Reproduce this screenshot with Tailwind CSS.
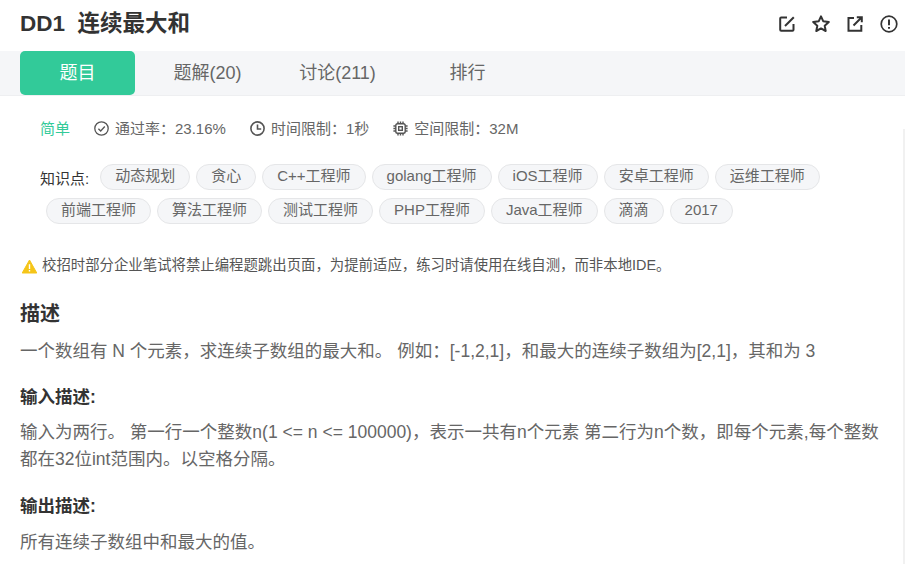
<!DOCTYPE html>
<html lang="zh-CN">
  <head>
    <meta charset="UTF-8" />
    <title>DD1 连续最大和</title>
    <script src="https://cdn.jsdelivr.net/npm/@tailwindcss/browser@4"></script>
  </head>
  <body class="h-[564px] w-[905px] overflow-hidden bg-white font-['Liberation_Sans','Noto_Sans_CJK_SC',sans-serif] text-[#666]">
    <!-- Title row -->
    <div class="flex h-[51px] items-center justify-between pr-[7px] pb-[4px] pl-5">
      <h1 class="text-[22.5px] font-bold whitespace-pre text-[#333]">DD1  连续最大和</h1>
      <div class="flex items-center gap-4 text-[#333]">
        <svg class="h-[18px] w-[18px]" viewBox="0 0 18 18" fill="none" stroke="currentColor" stroke-width="2"><path d="M9 2.5H3.2a1 1 0 0 0-1 1v11.3a1 1 0 0 0 1 1h11.3a1 1 0 0 0 1-1V9" /><path d="M7 11 15.8 2.2" /></svg>
        <svg class="h-[18px] w-[18px]" viewBox="0 0 18 18" fill="none" stroke="currentColor" stroke-width="2" stroke-linejoin="round"><path d="M9 1.4 11.2 6.2 16.8 7 12.7 10.7 13.7 16 9 13.4 4.3 16 5.3 10.7 1.2 7 6.8 6.2Z" /></svg>
        <svg class="h-[18px] w-[18px]" viewBox="0 0 18 18" fill="none" stroke="currentColor" stroke-width="2"><path d="M8 3H2.5v12.8h12.8V10" /><path d="M7.5 10.5 15.5 2.5M10.8 2.2h5v5" /></svg>
        <svg class="h-[18px] w-[18px]" viewBox="0 0 18 18" fill="none" stroke="currentColor" stroke-width="1.7"><circle cx="9" cy="9" r="7.8" /><path d="M9 4.6v5.6" stroke-width="2" /><path d="M9 12v1.8" stroke-width="2" /></svg>
      </div>
    </div>

    <!-- Tabs -->
    <div class="flex h-[45px] gap-[15px] border-b border-[#eeeff1] bg-[#f5f6f8] pl-5 text-lg">
      <a class="flex h-[44px] w-[115px] items-center justify-center rounded-[5px] bg-[#32ca99] text-white">题目</a>
      <a class="flex h-[44px] w-[115px] items-center justify-center">题解(20)</a>
      <a class="flex h-[44px] w-[115px] items-center justify-center">讨论(211)</a>
      <a class="flex h-[44px] w-[115px] items-center justify-center">排行</a>
    </div>

    <div class="relative">
      <!-- Scroll track -->
      <div class="absolute top-[10px] right-0 h-[460px] w-[2px] bg-[#f1f1f1]"></div>

      <!-- Meta -->
      <div class="mt-[23px] flex h-[20px] items-center pl-10 text-[15px]">
        <span class="text-[#32ca99]">简单</span>
        <svg class="mb-[2px] ml-[24px] h-[15px] w-[15px]" viewBox="0 0 15 15" fill="none" stroke="#555" stroke-width="1.3"><circle cx="7.5" cy="7.5" r="6.7" /><path d="M4.4 7.7 6.7 10 10.8 5.5" /></svg>
        <span class="ml-1.5">通过率：23.16%</span>
        <svg class="mb-[2px] ml-[24px] h-[15px] w-[15px]" viewBox="0 0 15 15" fill="none" stroke="#555" stroke-width="1.6"><circle cx="7.5" cy="7.5" r="6.6" /><path d="M7.5 3.4V8H11.2" /></svg>
        <span class="ml-1.5">时间限制：1秒</span>
        <svg class="mb-[2px] ml-[24px] h-[15px] w-[15px]" viewBox="0 0 15 15" fill="none" stroke="#555" stroke-width="1.4"><rect x="2.8" y="2.8" width="9.4" height="9.4" rx="1.8" /><rect x="5.7" y="5.7" width="3.6" height="3.6" /><path d="M5 .4v2.4M7.5 .4v2.4M10 .4v2.4M5 12.2v2.4M7.5 12.2v2.4M10 12.2v2.4M.4 5h2.4M.4 7.5h2.4M.4 10h2.4M12.2 5h2.4M12.2 7.5h2.4M12.2 10h2.4" /></svg>
        <span class="ml-1.5">空间限制：32M</span>
      </div>

      <!-- Tags -->
      <div class="mt-[25px] flex flex-wrap gap-y-2 pr-[80px] pl-10 text-[15px]">
        <span class="mr-[5px] flex h-[26px] translate-y-[2px] items-center text-[#333]">知识点:</span>
        <span class="ml-1.5 h-[26px] rounded-full border border-[#e5e6e8] bg-[#f5f6f8] px-[14px] leading-[22px]">动态规划</span>
        <span class="ml-1.5 h-[26px] rounded-full border border-[#e5e6e8] bg-[#f5f6f8] px-[14px] leading-[22px]">贪心</span>
        <span class="ml-1.5 h-[26px] rounded-full border border-[#e5e6e8] bg-[#f5f6f8] px-[14px] leading-[22px]">C++工程师</span>
        <span class="ml-1.5 h-[26px] rounded-full border border-[#e5e6e8] bg-[#f5f6f8] px-[14px] leading-[22px]">golang工程师</span>
        <span class="ml-1.5 h-[26px] rounded-full border border-[#e5e6e8] bg-[#f5f6f8] px-[14px] leading-[22px]">iOS工程师</span>
        <span class="ml-1.5 h-[26px] rounded-full border border-[#e5e6e8] bg-[#f5f6f8] px-[14px] leading-[22px]">安卓工程师</span>
        <span class="ml-1.5 h-[26px] rounded-full border border-[#e5e6e8] bg-[#f5f6f8] px-[14px] leading-[22px]">运维工程师</span>
        <span class="ml-1.5 h-[26px] rounded-full border border-[#e5e6e8] bg-[#f5f6f8] px-[14px] leading-[22px]">前端工程师</span>
        <span class="ml-1.5 h-[26px] rounded-full border border-[#e5e6e8] bg-[#f5f6f8] px-[14px] leading-[22px]">算法工程师</span>
        <span class="ml-1.5 h-[26px] rounded-full border border-[#e5e6e8] bg-[#f5f6f8] px-[14px] leading-[22px]">测试工程师</span>
        <span class="ml-1.5 h-[26px] rounded-full border border-[#e5e6e8] bg-[#f5f6f8] px-[14px] leading-[22px]">PHP工程师</span>
        <span class="ml-1.5 h-[26px] rounded-full border border-[#e5e6e8] bg-[#f5f6f8] px-[14px] leading-[22px]">Java工程师</span>
        <span class="ml-1.5 h-[26px] rounded-full border border-[#e5e6e8] bg-[#f5f6f8] px-[14px] leading-[22px]">滴滴</span>
        <span class="ml-1.5 h-[26px] rounded-full border border-[#e5e6e8] bg-[#f5f6f8] px-[14px] leading-[22px]">2017</span>
      </div>

      <!-- Notice -->
      <div class="mt-[31px] flex h-[22px] items-center pl-[22px] text-[14.4px] text-[#555]">
        <svg class="h-[15px] w-[15px]" viewBox="0 0 15 15"><path d="M7.5 1 14.8 14H.2Z" fill="#f5c518" stroke="#f5c518" stroke-linejoin="round" /><path d="M7.5 5.2V10M7.5 11v1.6" stroke="#fff" stroke-width="1.4" /></svg>
        <span class="ml-[5px]">校招时部分企业笔试将禁止编程题跳出页面，为提前适应，练习时请使用在线自测，而非本地IDE。</span>
      </div>

      <!-- Problem body -->
      <div class="pr-[25px] pl-5 text-[17.5px] leading-[27px]">
        <h2 class="mt-[24px] text-[20px] leading-[27px] font-bold text-[#333]">描述</h2>
        <p class="mt-[10px]">一个数组有 N 个元素，求连续子数组的最大和。 例如：[-1,2,1]，和最大的连续子数组为[2,1]，其和为 3</p>
        <h3 class="mt-[19px] font-bold text-[#333]">输入描述:</h3>
        <p class="mt-[8px] break-all">输入为两行。 第一行一个整数n(1 &lt;= n &lt;= 100000)，表示一共有n个元素 第二行为n个数，即每个元素,每个整数都在32位int范围内。以空格分隔。</p>
        <h3 class="mt-[20px] font-bold text-[#333]">输出描述:</h3>
        <p class="mt-[9px]">所有连续子数组中和最大的值。</p>
      </div>
    </div>
  </body>
</html>
